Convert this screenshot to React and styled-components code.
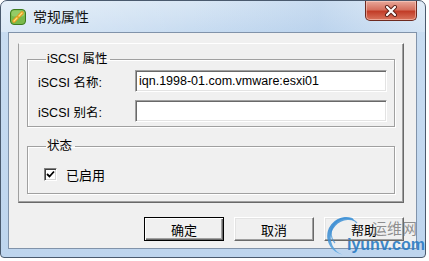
import React from "react";
import styled, { createGlobalStyle } from "styled-components";

const GlobalStyle = createGlobalStyle`
  html, body {
    margin: 0;
    padding: 0;
    background: #fff;
  }
  body {
    font-family: "Liberation Sans", "Noto Sans CJK SC", sans-serif;
    font-size: 12.5px;
    color: #000;
  }
`;

function AppIcon() {
  return (
    <svg width="16" height="16" viewBox="0 0 16 16">
      <rect x="0.5" y="0.5" width="15" height="15" rx="3.5" fill="#79b94a" stroke="#3d7a1f" />
      <rect x="1.5" y="1.5" width="13" height="6" rx="2.5" fill="#a6d77c" opacity="0.6" />
      <path d="M4 12 L7 9" stroke="#e59a1e" strokeWidth="3.6" strokeLinecap="round" />
      <path d="M9 7 L12 4" stroke="#e59a1e" strokeWidth="3.6" strokeLinecap="round" />
      <path d="M4 12 L7 9 M9 7 L12 4" stroke="#ffe27a" strokeWidth="1.4" strokeLinecap="round" />
    </svg>
  );
}

function CloseGlyph() {
  return (
    <svg width="14" height="12" viewBox="0 0 14 12">
      <path d="M3 2 L11 10 M11 2 L3 10" stroke="#5a2119" strokeWidth="4" strokeLinecap="round" />
      <path d="M3 2 L11 10 M11 2 L3 10" stroke="#fff" strokeWidth="2.2" strokeLinecap="round" />
    </svg>
  );
}

function CheckMark() {
  return (
    <svg width="9" height="9" viewBox="0 0 9 9">
      <path d="M1 4 L3.5 6.5 L8 1.5" fill="none" stroke="#000" strokeWidth="1.8" />
    </svg>
  );
}

function Swoosh() {
  return (
    <Swirl width="40" height="44" viewBox="0 0 40 44">
      <defs>
        <linearGradient id="wm" x1="0" y1="0" x2="1" y2="1">
          <stop offset="0" stopColor="#1f78c8" />
          <stop offset="1" stopColor="#7cc2f0" />
        </linearGradient>
      </defs>
      <path
        d="M29.5 5.1 A19 19 0 1 0 19.7 41.7 A16 16 0 1 1 31.5 8 Z"
        fill="url(#wm)"
        opacity="0.85"
      />
      <path d="M34 10 A14 14 0 0 0 12 30" fill="none" stroke="#3b8fd6" strokeWidth="1.2" opacity="0.7" />
    </Swirl>
  );
}

export default function App() {
  return (
    <>
      <GlobalStyle />
      <Window>
        <TitleBar>
          <AppIcon />
          <Title>常规属性</Title>
          <CloseButton>
            <CloseGlyph />
          </CloseButton>
        </TitleBar>
        <Panel>
          <Etched>
            <Group>
              <Legend>iSCSI 属性</Legend>
              <Fields>
                <Label>iSCSI 名称:</Label>
                <TextBox>iqn.1998-01.com.vmware:esxi01</TextBox>
                <Label>iSCSI 别名:</Label>
                <TextBox />
              </Fields>
            </Group>
            <Group $spaced>
              <Legend>状态</Legend>
              <CheckRow>
                <CheckBox>
                  <CheckMark />
                </CheckBox>
                <span>已启用</span>
              </CheckRow>
            </Group>
          </Etched>
          <ButtonRow>
            <Button $default>确定</Button>
            <Button>取消</Button>
            <Button>帮助</Button>
          </ButtonRow>
        </Panel>
        <Watermark>
          <Swoosh />
          <WatermarkCn>运维网</WatermarkCn>
          <WatermarkUrl>iyunv.com</WatermarkUrl>
        </Watermark>
      </Window>
    </>
  );
}

const Window = styled.div`
  position: relative;
  width: 426px;
  height: 258px;
  box-sizing: border-box;
  border: 1px solid #4a5a6e;
  border-radius: 7px 7px 4px 4px;
  background: linear-gradient(180deg, #d9e7f5 0%, #c8dcf1 12%, #bed5ee 100%);
  display: flex;
  flex-direction: column;
  padding: 0 8px 8px 7px;
  overflow: hidden;
`;

const TitleBar = styled.div`
  height: 31px;
  display: flex;
  align-items: center;
  gap: 7px;
  background: linear-gradient(90deg, rgba(255, 255, 255, 0.35) 0%, rgba(255, 255, 255, 0) 45%, rgba(150, 185, 225, 0.25) 75%, rgba(255, 255, 255, 0.2) 100%);
  margin: 0 -8px 0 -7px;
  padding: 0 8px 0 9px;
`;

const Title = styled.span`
  font-size: 14px;
  color: #111;
  flex: 1;
  padding-bottom: 1px;
`;

const CloseButton = styled.div`
  align-self: flex-start;
  width: 52px;
  height: 20px;
  box-sizing: border-box;
  border: 1px solid #6d2a20;
  border-top: none;
  border-radius: 0 0 5px 5px;
  background: linear-gradient(180deg, #e8a89a 0%, #d5715f 45%, #c23d28 55%, #d9745d 100%);
  box-shadow: inset 0 0 0 1px rgba(255, 220, 210, 0.5);
  display: flex;
  align-items: center;
  justify-content: center;
`;

const Panel = styled.div`
  flex: 1;
  background: #f0f0f0;
  border: 1px solid #8193aa;
  padding: 10px 12px 0 9px;
  display: flex;
  flex-direction: column;
`;

const Etched = styled.div`
  border: 1px solid;
  border-color: #fff #696969 #696969 #a0a0a0;
  box-shadow: inset -1px -1px 0 #a0a0a0;
  padding: 8px;
`;

const Group = styled.fieldset`
  margin: ${(p) => (p.$spaced ? "12px" : "0")} 0 0 0;
  padding: 0 7px 4px 10px;
  border: 1px solid #a0a0a0;
  box-shadow: inset 1px 1px 0 #fff, 1px 1px 0 #fff;
  min-width: 0;
`;

const Legend = styled.legend`
  padding: 0 3px 0 1px;
  margin-left: 8px;
  line-height: 15px;
  font-size: 12.5px;
`;

const Fields = styled.div`
  display: grid;
  grid-template-columns: 97px 1fr;
  row-gap: 8px;
  align-items: center;
  margin-top: 3px;
`;

const Label = styled.span`
  white-space: nowrap;
`;

const TextBox = styled.div`
  height: 22px;
  box-sizing: border-box;
  background: #fff;
  border: 1px solid;
  border-color: #a0a0a0 #fff #fff #a0a0a0;
  box-shadow: inset 1px 1px 0 #696969, inset -1px -1px 0 #e3e3e3;
  padding: 3px 3px 0 3px;
  font-size: 12.5px;
  line-height: 15px;
  white-space: nowrap;
`;

const CheckRow = styled.div`
  display: flex;
  align-items: center;
  gap: 9px;
  margin: 11px 0 5px 6px;
  font-size: 13px;
`;

const CheckBox = styled.span`
  width: 13px;
  height: 13px;
  box-sizing: border-box;
  background: #fff;
  border: 1px solid;
  border-color: #808080 #fff #fff #808080;
  box-shadow: inset 1px 1px 0 #404040, inset -1px -1px 0 #d4d4d4;
  display: flex;
  align-items: center;
  justify-content: center;
`;

const ButtonRow = styled.div`
  display: flex;
  justify-content: flex-end;
  gap: 10px;
  margin-top: 14px;
`;

const Button = styled.div`
  width: 80px;
  height: 24px;
  box-sizing: border-box;
  background: #f0f0f0;
  border: 1px solid;
  border-color: ${(p) => (p.$default ? "#000" : "#fff #696969 #696969 #fff")};
  box-shadow: ${(p) =>
    p.$default
      ? "inset 1px 1px 0 #fff, inset -1px -1px 0 #696969, inset -2px -2px 0 #a0a0a0"
      : "inset -1px -1px 0 #a0a0a0, inset 1px 1px 0 #e3e3e3"};
  display: flex;
  align-items: center;
  justify-content: center;
  font-size: 13px;
`;

const Watermark = styled.div`
  position: absolute;
  left: 322px;
  top: 212px;
  width: 104px;
  height: 44px;
  pointer-events: none;
`;

const Swirl = styled.svg`
  position: absolute;
  left: 0;
  top: 0;
`;

const WatermarkCn = styled.span`
  position: absolute;
  left: 49px;
  top: 6px;
  font-size: 15px;
  line-height: 20px;
  color: rgba(110, 110, 110, 0.75);
`;

const WatermarkUrl = styled.span`
  position: absolute;
  left: 24px;
  top: 23px;
  font-size: 16px;
  line-height: 18px;
  font-weight: bold;
  color: #2a7cc4;
  opacity: 0.9;
`;
